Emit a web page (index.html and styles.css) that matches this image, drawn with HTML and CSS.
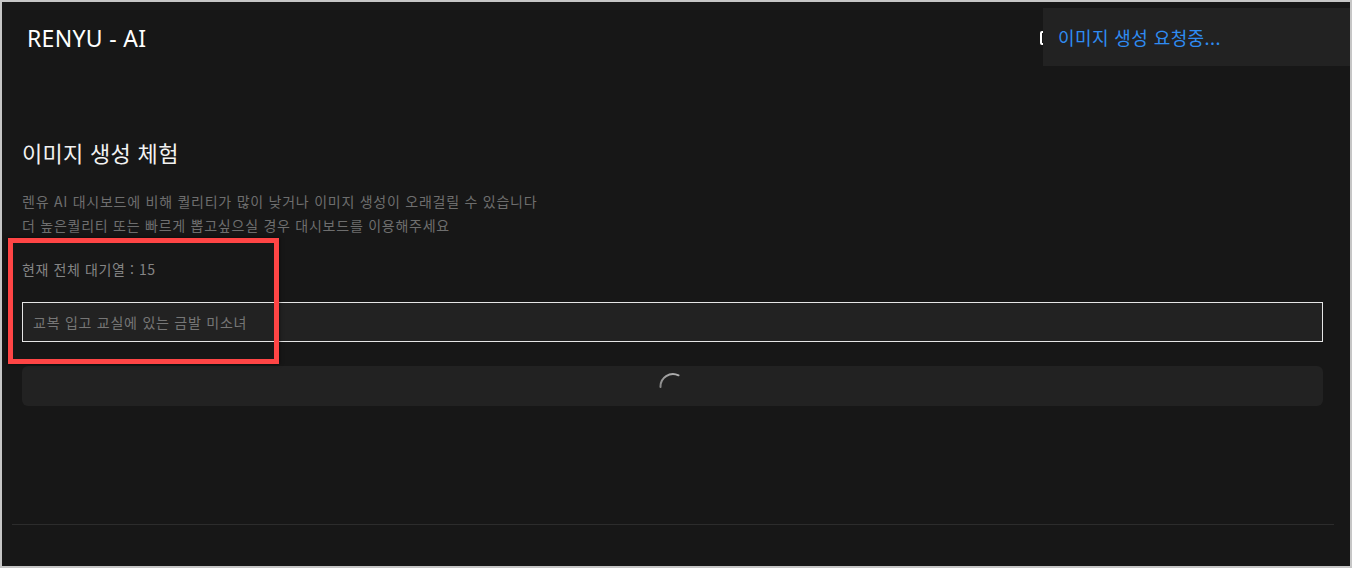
FILE: index.html
```html
<!DOCTYPE html>
<html lang="ko">
<head>
<meta charset="utf-8">
<title>RENYU - AI</title>
<link rel="stylesheet" href="styles.css">
</head>
<body>
<div class="frame">
  <header class="header">
    <div class="logo">RENYU - AI</div>
    <nav class="nav">
      <svg class="nav-icon" width="18" height="18" viewBox="0 0 18 18">
        <rect x="2" y="3" width="14" height="12" rx="1" fill="none" stroke="#ffffff" stroke-width="2"/>
      </svg>
    </nav>
  </header>
  <main class="main">
    <h2 class="title">이미지 생성 체험</h2>
    <p class="desc">렌유 AI 대시보드에 비해 퀄리티가 많이 낮거나 이미지 생성이 오래걸릴 수 있습니다<br>더 높은퀄리티 또는 빠르게 뽑고싶으실 경우 대시보드를 이용해주세요</p>
    <p class="queue">현재 전체 대기열 : 15</p>
    <input class="prompt" type="text" placeholder="교복 입고 교실에 있는 금발 미소녀">
    <button class="gen-btn" type="button">
      <svg class="spinner" width="28" height="28" viewBox="0 0 28 28">
        <defs>
          <linearGradient id="sg" x1="0" y1="1" x2="1" y2="0">
            <stop offset="0" stop-color="#8a8a8a"/>
            <stop offset="1" stop-color="#b0b0b0"/>
          </linearGradient>
        </defs>
        <path d="M1.5 15 A12.5 12.5 0 0 1 19.5 3.3" fill="none" stroke="url(#sg)" stroke-width="2" stroke-linecap="round"/>
      </svg>
    </button>
  </main>
  <footer class="footer"></footer>
  <div class="annotation"></div>
  <div class="toast">이미지 생성 요청중...</div>
</div>
</body>
</html>
```
FILE: styles.css
```css
* { box-sizing: border-box; }
html, body { margin: 0; padding: 0; }
body {
  background: #c6c6c6;
  font-family: "Noto Sans", "Noto Sans CJK KR", sans-serif;
}
.frame {
  position: relative;
  width: 1352px;
  height: 568px;
  border: 2px solid #c6c6c6;
  background: #171717;
  overflow: hidden;
}
.header {
  height: 72px;
  display: flex;
  align-items: center;
  justify-content: space-between;
  padding: 0 293px 0 25px;
}
.logo {
  color: #ffffff;
  font-size: 23px;
  font-weight: 400;
  letter-spacing: 0.3px;
  font-family: "Noto Sans", "Noto Sans CJK KR", sans-serif;
}
.nav-icon { display: block; }
.main {
  display: flex;
  flex-direction: column;
  padding: 0 27px 0 20px;
}
.title {
  margin: 62px 0 0;
  font-size: 22px;
  line-height: 32px;
  font-weight: 400;
  letter-spacing: 0.3px;
  color: #f2f2f2;
  font-family: "Noto Sans CJK KR", sans-serif;
}
.desc {
  margin: 21px 0 0;
  font-size: 14px;
  line-height: 24px;
  letter-spacing: 0.75px;
  color: #6e6e6e;
  font-family: "Noto Sans CJK KR", sans-serif;
}
.queue {
  margin: 20px 0 0;
  font-size: 14px;
  line-height: 24px;
  letter-spacing: 0.6px;
  color: #858585;
  font-family: "Noto Sans CJK KR", sans-serif;
}
.prompt {
  margin: 21px 0 0;
  height: 40px;
  width: 100%;
  border: 1px solid #e6e6e6;
  background: #222222;
  padding: 0 10px;
  font-size: 14px;
  letter-spacing: 0.75px;
  color: #dddddd;
  font-family: "Noto Sans CJK KR", sans-serif;
  outline: none;
}
.prompt::placeholder { color: #767676; }
.gen-btn {
  margin: 24px 0 0;
  height: 40px;
  width: 100%;
  border: none;
  border-radius: 6px;
  background: #222222;
  display: flex;
  align-items: center;
  justify-content: center;
  padding: 0;
}
.spinner { display: block; }
.footer {
  margin: 118px 16px 0 10px;
  border-top: 1px solid #2c2c2c;
}
.annotation {
  position: absolute;
  left: 6px;
  top: 236px;
  width: 271px;
  height: 126px;
  border: 5px solid #ff4545;
  box-shadow: 0 0 4px rgba(0, 0, 0, 0.7);
  pointer-events: none;
}
.toast {
  position: absolute;
  top: 6px;
  right: 0;
  width: 307px;
  height: 58px;
  background: #222222;
  color: #2f8cf2;
  font-size: 18px;
  letter-spacing: 0.4px;
  font-family: "Noto Sans CJK KR", sans-serif;
  display: flex;
  align-items: center;
  padding-left: 15px;
}
```
